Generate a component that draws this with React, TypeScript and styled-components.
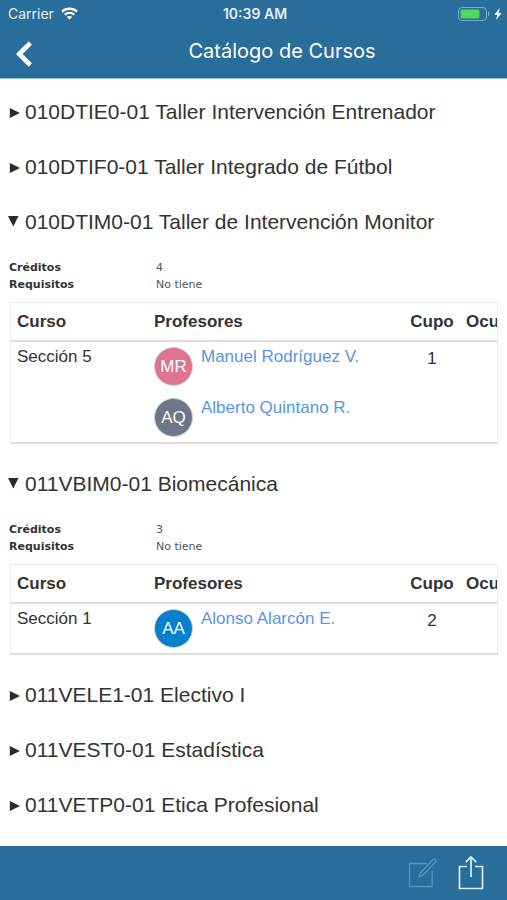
import { useId, useState } from "react";
import styled, { createGlobalStyle } from "styled-components";

type Teacher = { initials: string; name: string; color: string };
type Section = { name: string; seats: number; teachers: Teacher[] };
type Course = {
  title: string;
  open?: boolean;
  credits?: number;
  requirements?: string;
  sections?: Section[];
};

const courses: Course[] = [
  { title: "010DTIE0-01 Taller Intervención Entrenador" },
  { title: "010DTIF0-01 Taller Integrado de Fútbol" },
  {
    title: "010DTIM0-01 Taller de Intervención Monitor",
    open: true,
    credits: 4,
    requirements: "No tiene",
    sections: [
      {
        name: "Sección 5",
        seats: 1,
        teachers: [
          { initials: "MR", name: "Manuel Rodríguez V.", color: "#de7490" },
          { initials: "AQ", name: "Alberto Quintano R.", color: "#6c7885" },
        ],
      },
    ],
  },
  {
    title: "011VBIM0-01 Biomecánica",
    open: true,
    credits: 3,
    requirements: "No tiene",
    sections: [
      {
        name: "Sección 1",
        seats: 2,
        teachers: [{ initials: "AA", name: "Alonso Alarcón E.", color: "#0580cd" }],
      },
    ],
  },
  { title: "011VELE1-01 Electivo I" },
  { title: "011VEST0-01 Estadística" },
  { title: "011VETP0-01 Etica Profesional" },
];

const GlobalStyle = createGlobalStyle`
  *, *::before, *::after { box-sizing: border-box; }
  body {
    margin: 0;
    background: #fff;
    color: #333;
    font-family: "Liberation Sans", Arial, sans-serif;
  }
`;

const Screen = styled.div`
  display: flex;
  flex-direction: column;
  min-height: 100vh;
`;

const Header = styled.header`
  background: #296d9b;
  color: #fff;
  border-bottom: 1px solid #8fc3e3;
  font-family: Inter, Roboto, sans-serif;
`;

const StatusBar = styled.div`
  display: grid;
  grid-template-columns: 1fr auto 1fr;
  align-items: center;
  height: 27px;
  padding: 0 5px 0 8px;
  font-size: 14px;
  color: #e4eff6;
`;

const StatusGroup = styled.div<{ $end?: boolean }>`
  display: flex;
  align-items: center;
  justify-content: ${(p) => (p.$end ? "flex-end" : "flex-start")};
  gap: ${(p) => (p.$end ? 4 : 7)}px;
`;

const Clock = styled.time`
  font-weight: 600;
`;

const NavBar = styled.div`
  display: flex;
  align-items: center;
  height: 51px;
  padding-top: 2px;
`;

const BackButton = styled.button`
  display: flex;
  align-items: center;
  width: 57px;
  height: 49px;
  padding: 0 0 0 15px;
  border: 0;
  background: none;
  color: #fff;
`;

const Title = styled.h1`
  flex: 1;
  margin: 0;
  padding-bottom: 6px;
  font-size: 20px;
  line-height: 24px;
  font-weight: 400;
  text-align: center;
`;

const CourseList = styled.main`
  flex: 1;
  padding: 5px 9px 12px;
`;

const CourseHeading = styled.h2`
  margin: 0;
  font-size: 21px;
  font-weight: 400;
`;

const CourseToggle = styled.button`
  display: flex;
  align-items: center;
  width: 100%;
  min-height: 55px;
  padding: 0;
  border: 0;
  background: none;
  color: #333;
  font: inherit;
  text-align: left;
  cursor: pointer;
`;

const Marker = styled.svg`
  flex: none;
  width: 12px;
  height: 12px;
  margin-right: 4px;
  overflow: visible;
  fill: #2b2b2b;
`;

const Details = styled.div`
  padding: 10px 0 12px;
`;

const Facts = styled.dl`
  display: grid;
  grid-template-columns: 147px 1fr;
  margin: 0 0 9px;
  font-family: "DejaVu Sans", Verdana, sans-serif;
  font-size: 11px;
  line-height: 17px;
`;

const FactName = styled.dt`
  font-weight: 700;
`;

const FactValue = styled.dd`
  margin: 0;
  color: #555;
`;

const TableFrame = styled.div`
  overflow: hidden;
  margin-left: 1px;
  border: 1px solid #ececec;
  border-bottom: 2px solid #dedede;
`;

const SectionTable = styled.table`
  width: 100%;
  border-collapse: collapse;
  table-layout: fixed;
  font-size: 17px;
  line-height: 20px;
`;

const Column = styled.col<{ $width?: number }>`
  width: ${(p) => (p.$width ? `${p.$width}px` : "auto")};
`;

const HeadCell = styled.th<{ $center?: boolean }>`
  height: 38px;
  padding: 0 ${(p) => (p.$center ? 0 : 6)}px;
  border-bottom: 2px solid #dedede;
  text-align: ${(p) => (p.$center ? "center" : "left")};
`;

const Cell = styled.td<{ $center?: boolean }>`
  padding: 5px 6px;
  vertical-align: top;
  text-align: ${(p) => (p.$center ? "center" : "left")};
`;

const Seats = styled.span`
  display: block;
  padding-top: 2px;
`;

const TeacherList = styled.ul`
  display: flex;
  flex-direction: column;
  gap: 12px;
  margin: 0;
  padding: 0;
  list-style: none;
`;

const TeacherItem = styled.li`
  display: flex;
  gap: 8px;
`;

const Avatar = styled.span<{ $color: string }>`
  display: grid;
  place-items: center;
  flex: none;
  width: 39px;
  height: 39px;
  border: 1px solid #cfd3d6;
  border-radius: 50%;
  background: ${(p) => p.$color};
  color: #fff;
`;

const TeacherLink = styled.a`
  color: #5596e6;
  text-decoration: none;
  white-space: nowrap;
`;

const ToolBar = styled.footer`
  display: flex;
  align-items: center;
  justify-content: flex-end;
  gap: 20px;
  height: 54px;
  padding: 0 23px;
  background: #296d9b;
`;

const ToolButton = styled.button`
  display: flex;
  padding: 0;
  border: 0;
  background: none;
  color: #d9effc;

  &:disabled {
    color: #5795bd;
  }
`;

function WifiIcon() {
  return (
    <svg width="17" height="13" viewBox="0 0 17 13" fill="none" stroke="#fff" strokeWidth="2.2" aria-hidden="true">
      <path d="M1 4.6C5.2.7 11.8.7 16 4.6" />
      <path d="M3.8 7.6c2.7-2.4 6.7-2.4 9.4 0" />
      <path d="M8.5 12.5 5.9 9.9c1.5-1.3 3.7-1.3 5.2 0z" fill="#fff" stroke="none" />
    </svg>
  );
}

function BatteryIcon() {
  return (
    <svg width="32" height="14" viewBox="0 0 32 14" aria-hidden="true">
      <rect x=".5" y=".5" width="28" height="13" rx="3.5" fill="none" stroke="#7fa9c4" />
      <rect x="2.5" y="2.5" width="19" height="9" rx="1.5" fill="#4cdb60" />
      <path d="M30 4.6c2 .8 2 4 0 4.8z" fill="#7fa9c4" />
    </svg>
  );
}

function BoltIcon() {
  return (
    <svg width="8" height="12" viewBox="0 0 8 12" fill="#fff" aria-hidden="true">
      <path d="M5.8 0 .3 6.8h3L2.1 12 7.700 5H4.600z" />
    </svg>
  );
}

function BackIcon() {
  return (
    <svg width="18" height="26" viewBox="0 0 18 26" fill="none" stroke="currentColor" strokeWidth="4.6" aria-hidden="true">
      <path d="M15.3 2 4.2 13l11.1 11" />
    </svg>
  );
}

function ComposeIcon() {
  return (
    <svg width="30" height="36" viewBox="0 0 30 36" fill="none" stroke="currentColor" strokeWidth="1.3" aria-hidden="true">
      <path d="M18.500 8.500H1.500v23h22.700V16" />
      <path d="m12 18.500 12.600-13.700c1.500-1.500 4.300.8 2.800 2.500L14.600 20.500l-3.500 1.200z" />
    </svg>
  );
}

function ShareIcon() {
  return (
    <svg width="26" height="36" viewBox="0 0 26 36" fill="none" stroke="currentColor" strokeWidth="1.7" aria-hidden="true">
      <path d="M9 11.500H1.500v22h23v-22H17" />
      <path d="M13 22V2M7.800 7.200 13 2l5.200 5.200" />
    </svg>
  );
}

function CourseEntry({ course }: { course: Course }) {
  const [open, setOpen] = useState(Boolean(course.open));
  const panelId = useId();

  return (
    <section>
      <CourseHeading>
        <CourseToggle aria-expanded={open} aria-controls={panelId} onClick={() => setOpen(!open)}>
          <Marker viewBox="0 0 12 12" aria-hidden="true">
            {open ? <path d="M-1 0H9.500L4.300 10.500z" /> : <path d="M.8 2 11 7 .8 12z" />}
          </Marker>
          {course.title}
        </CourseToggle>
      </CourseHeading>
      {open && course.sections && (
        <Details id={panelId}>
          <Facts>
            <FactName>Créditos</FactName>
            <FactValue>{course.credits}</FactValue>
            <FactName>Requisitos</FactName>
            <FactValue>{course.requirements}</FactValue>
          </Facts>
          <TableFrame>
            <SectionTable>
              <colgroup>
                <Column $width={137} />
                <Column $width={256} />
                <Column $width={56} />
                <Column />
              </colgroup>
              <thead>
                <tr>
                  <HeadCell scope="col">Curso</HeadCell>
                  <HeadCell scope="col">Profesores</HeadCell>
                  <HeadCell scope="col" $center>Cupo</HeadCell>
                  <HeadCell scope="col">Ocu</HeadCell>
                </tr>
              </thead>
              <tbody>
                {course.sections.map((section) => (
                  <tr key={section.name}>
                    <Cell>{section.name}</Cell>
                    <Cell>
                      <TeacherList>
                        {section.teachers.map((teacher) => (
                          <TeacherItem key={teacher.initials}>
                            <Avatar $color={teacher.color}>{teacher.initials}</Avatar>
                            <TeacherLink href="#">{teacher.name}</TeacherLink>
                          </TeacherItem>
                        ))}
                      </TeacherList>
                    </Cell>
                    <Cell $center>
                      <Seats>{section.seats}</Seats>
                    </Cell>
                    <Cell />
                  </tr>
                ))}
              </tbody>
            </SectionTable>
          </TableFrame>
        </Details>
      )}
    </section>
  );
}

export default function App() {
  return (
    <Screen>
      <GlobalStyle />
      <Header>
        <StatusBar>
          <StatusGroup>
            Carrier
            <WifiIcon />
          </StatusGroup>
          <Clock>10:39 AM</Clock>
          <StatusGroup $end>
            <BatteryIcon />
            <BoltIcon />
          </StatusGroup>
        </StatusBar>
        <NavBar>
          <BackButton aria-label="Volver">
            <BackIcon />
          </BackButton>
          <Title>Catálogo de Cursos</Title>
        </NavBar>
      </Header>
      <CourseList>
        {courses.map((course) => (
          <CourseEntry key={course.title} course={course} />
        ))}
      </CourseList>
      <ToolBar>
        <ToolButton aria-label="Editar" disabled>
          <ComposeIcon />
        </ToolButton>
        <ToolButton aria-label="Compartir">
          <ShareIcon />
        </ToolButton>
      </ToolBar>
    </Screen>
  );
}
